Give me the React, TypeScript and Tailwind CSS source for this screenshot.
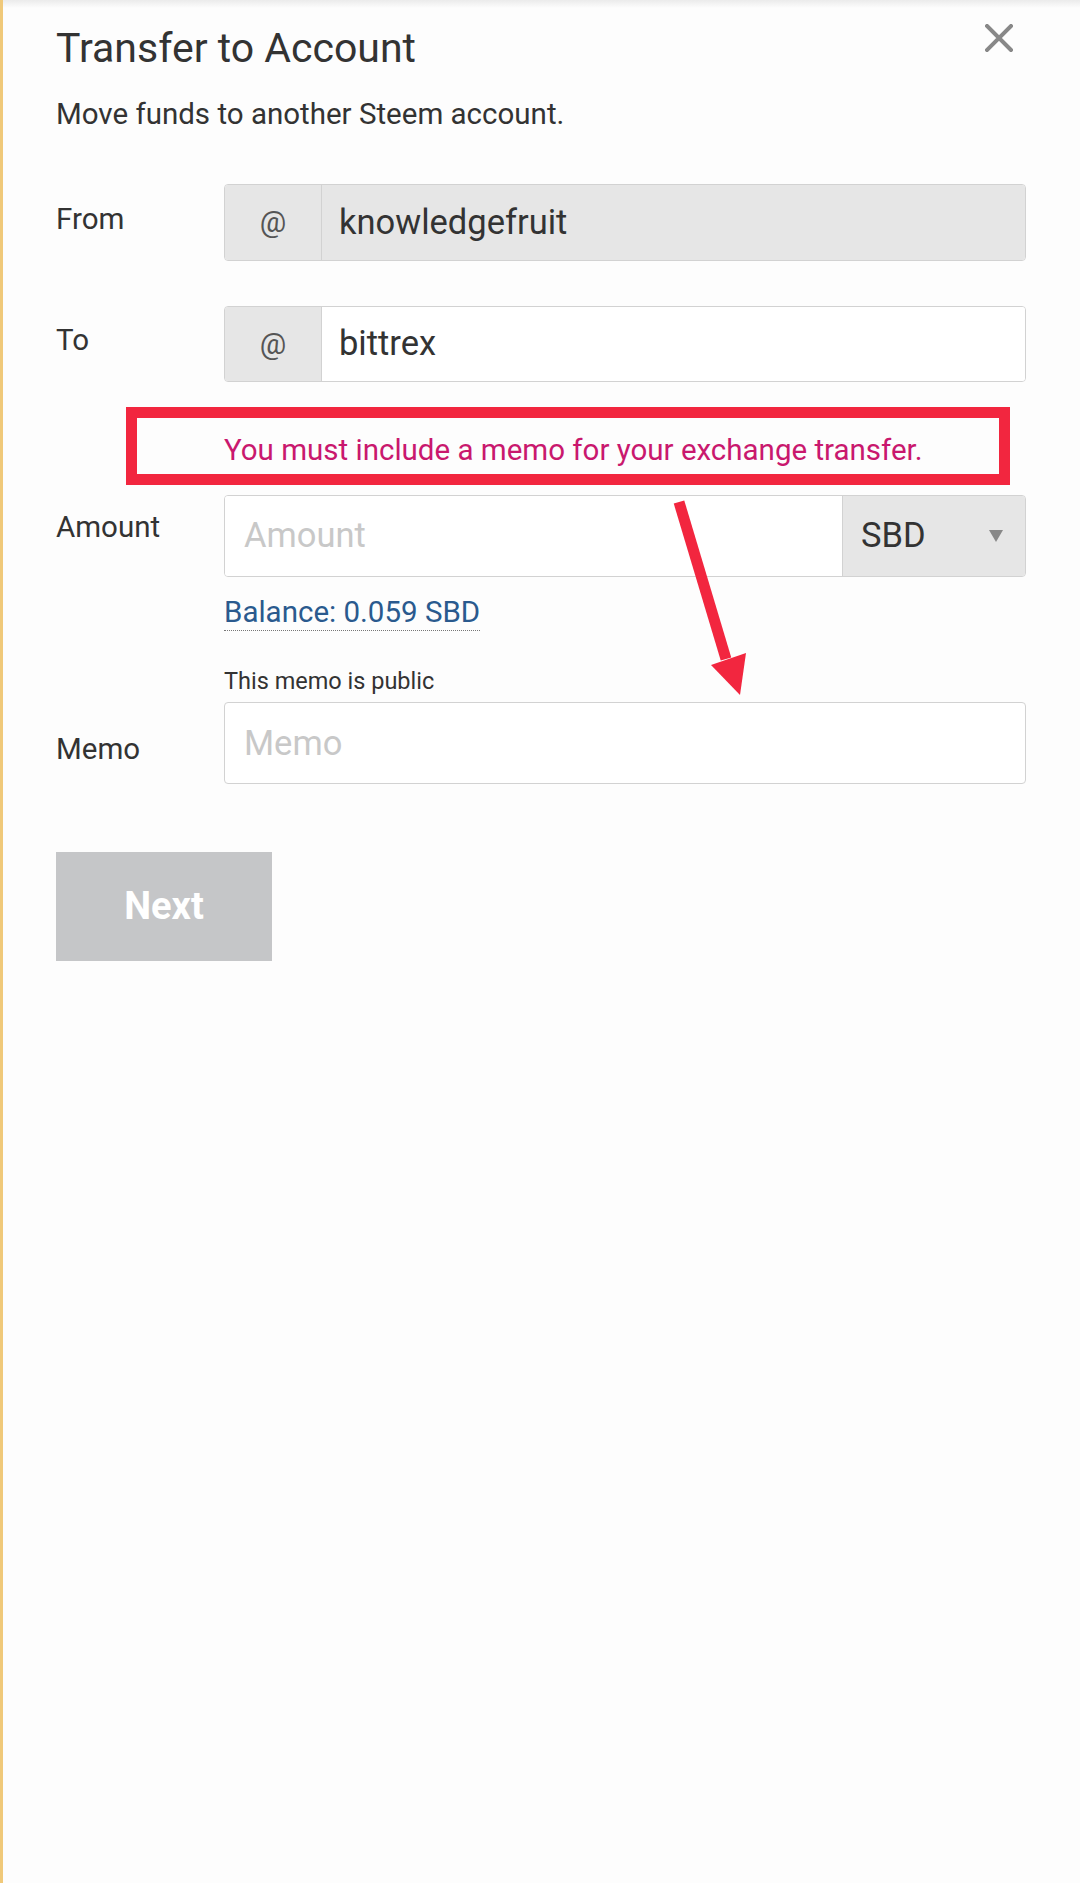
import React from 'react';

const labelCls = "w-[168px] shrink-0 text-[29.5px] leading-[36px] text-[#333]";

const AtGroup: React.FC<{ value: string; disabled?: boolean; height: string }> = ({ value, disabled, height }) => (
  <div className={`flex flex-1 ${height} border border-[#d2d2d2] rounded-[4px] overflow-hidden`}>
    <div className="w-[97px] shrink-0 flex items-center justify-center bg-[#e6e6e6] border-r border-[#d2d2d2] text-[29.5px] text-[#555]">
      @
    </div>
    <input
      readOnly
      value={value}
      className={`flex-1 min-w-0 pl-[17px] text-[34.5px] text-[#333] outline-none ${disabled ? 'bg-[#e6e6e6]' : 'bg-white'}`}
    />
  </div>
);

export default function App() {
  return (
    <div className="relative min-h-[1883px] w-full bg-[#fdfdfd] border-l-[3px] border-l-[#f0c97a] font-['Roboto','Liberation_Sans',sans-serif] text-[#333]">
      {/* top shadow strip */}
      <div className="h-2 bg-gradient-to-b from-[#ebebeb] to-[#fdfdfd]" />

      <div className="pl-[53px] pr-[54px]">
        {/* Header */}
        <div className="mt-[16px] flex items-start justify-between">
          <h2 className="text-[41px] leading-[48px] font-normal">Transfer to Account</h2>
          <button className="mt-[0px] mr-[13px]">
            <svg width="28" height="28" viewBox="0 0 28 28">
              <path d="M2 2 L26 26 M26 2 L2 26" stroke="#888" strokeWidth="4" strokeLinecap="square" />
            </svg>
          </button>
        </div>
        <p className="mt-[24px] text-[29.5px] leading-[36px]">Move funds to another Steem account.</p>

        {/* From */}
        <div className="mt-[52px] flex">
          <div className={`${labelCls} pt-[17px]`}>From</div>
          <AtGroup value="knowledgefruit" disabled height="h-[77px]" />
        </div>

        {/* To */}
        <div className="mt-[45px] flex">
          <div className={`${labelCls} pt-[16px]`}>To</div>
          <AtGroup value="bittrex" height="h-[76px]" />
        </div>

        {/* Error */}
        <div className="mt-[50px] pl-[168px] text-[29.5px] leading-[36px] text-[#c9186e]">
          You must include a memo for your exchange transfer.
        </div>

        {/* Amount */}
        <div className="mt-[27px] flex">
          <div className={`${labelCls} pt-[14px]`}>Amount</div>
          <div className="flex flex-1 h-[82px] border border-[#d2d2d2] rounded-[4px] overflow-hidden">
            <input
              placeholder="Amount"
              className="flex-1 min-w-0 pl-[19px] bg-white text-[34.5px] outline-none placeholder:text-[#c8c8c8]"
            />
            <div className="w-[183px] shrink-0 flex items-center justify-between pl-[18px] pr-[22px] bg-[#e6e6e6] border-l border-[#d2d2d2]">
              <span className="text-[34.5px] text-[#333]">SBD</span>
              <svg width="14" height="12" viewBox="0 0 14 12">
                <path d="M0 0 H14 L7 12 Z" fill="#888" />
              </svg>
            </div>
          </div>
        </div>

        {/* Balance */}
        <div className="mt-[17px] pl-[168px]">
          <span className="inline-block text-[29.5px] leading-[36px] text-[#2a5a8e] border-b border-dotted border-[#777]">
            Balance: 0.059 SBD
          </span>
        </div>

        {/* Memo */}
        <div className="mt-[36px] flex">
          <div className={`${labelCls} pt-[64px]`}>Memo</div>
          <div className="flex-1">
            <div className="text-[23.5px] leading-[28px] text-[#333]">This memo is public</div>
            <input
              placeholder="Memo"
              className="mt-[7px] w-full h-[82px] pl-[19px] bg-white border border-[#d2d2d2] rounded-[4px] text-[34.5px] outline-none placeholder:text-[#c8c8c8]"
            />
          </div>
        </div>

        {/* Next */}
        <button className="mt-[68px] w-[216px] h-[109px] bg-[#c5c6c8] text-white font-bold text-[38px]">
          Next
        </button>
      </div>

      {/* annotation: red rectangle around the error */}
      <div className="absolute left-[123px] top-[407px] w-[884px] h-[78px] border-[11px] border-[#f2263f] pointer-events-none" />

      {/* annotation: red arrow */}
      <svg className="absolute left-[663px] top-[495px] pointer-events-none" width="90" height="210" viewBox="0 0 90 210">
        <line x1="13" y1="7" x2="60" y2="164" stroke="#f2263f" strokeWidth="11" />
        <path d="M45 170 L80 158 L74 200 Z" fill="#f2263f" />
      </svg>
    </div>
  );
}
